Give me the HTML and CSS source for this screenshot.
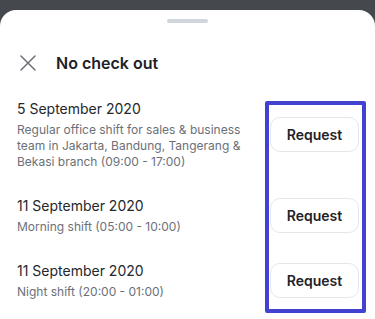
FILE: index.html
```html
<!DOCTYPE html>
<html>
<head>
<meta charset="utf-8">
<link rel="stylesheet" href="styles.css">
</head>
<body>
<div class="sheet">
  <div class="handle"></div>
  <div class="header">
    <svg class="close" width="16" height="16" viewBox="0 0 16 16"><path d="M1 1 L15 15 M15 1 L1 15" stroke="#6c7076" stroke-width="1.5" fill="none" stroke-linecap="round"/></svg>
    <div class="title">No check out</div>
  </div>
  <div class="list">
    <div class="row">
      <div class="info">
        <div class="date">5 September 2020</div>
        <div class="desc">Regular office shift for sales &amp; business team in Jakarta, Bandung, Tangerang &amp; Bekasi branch (09:00 - 17:00)</div>
      </div>
      <button class="btn">Request</button>
    </div>
    <div class="row">
      <div class="info">
        <div class="date">11 September 2020</div>
        <div class="desc">Morning shift (05:00 - 10:00)</div>
      </div>
      <button class="btn">Request</button>
    </div>
    <div class="row">
      <div class="info">
        <div class="date">11 September 2020</div>
        <div class="desc">Night shift (20:00 - 01:00)</div>
      </div>
      <button class="btn">Request</button>
    </div>
  </div>
  <div class="highlight"></div>
</div>
</body>
</html>
```
FILE: styles.css
```css
* { box-sizing: border-box; }
html, body { margin: 0; padding: 0; }
body {
  background: #45484d;
  width: 375px;
  height: 319px;
  overflow: hidden;
  font-family: Inter, "Noto Sans", sans-serif;
  padding-top: 10px;
}
.sheet {
  position: relative;
  background: #ffffff;
  border-radius: 16px 16px 0 0;
  height: 309px;
  padding-top: 9px;
}
.handle {
  width: 41px;
  height: 4px;
  border-radius: 2px;
  background: #d0d5dc;
  margin: 0 auto;
}
.header {
  display: flex;
  align-items: center;
  margin-top: 28px;
  height: 24px;
  padding-left: 20px;
}
.close { display: block; margin-right: 20px; }
.title {
  font-size: 16px;
  font-weight: 600;
  color: #1e2127;
  line-height: 24px;
}
.list {
  padding: 11px 16px 0 17px;
}
.row {
  display: grid;
  grid-template-columns: 1fr 89px;
  column-gap: 24px;
  align-items: center;
  padding: 13px 0;
}
.date {
  font-size: 14px;
  line-height: 20px;
  color: #24272c;
}
.desc {
  margin-top: 3px;
  font-size: 12px;
  line-height: 16px;
  color: #6b7078;
}
.btn {
  width: 89px;
  height: 35px;
  border: 1px solid #e4e6e9;
  border-radius: 10px;
  background: #fff;
  font-family: Inter, "Noto Sans", sans-serif;
  font-size: 14px;
  font-weight: 600;
  color: #1f2227;
  padding: 0;
}
.highlight {
  position: absolute;
  left: 265px;
  top: 91px;
  width: 101px;
  height: 212px;
  border: 4px solid #4341cf;
  border-radius: 2px;
}
```
